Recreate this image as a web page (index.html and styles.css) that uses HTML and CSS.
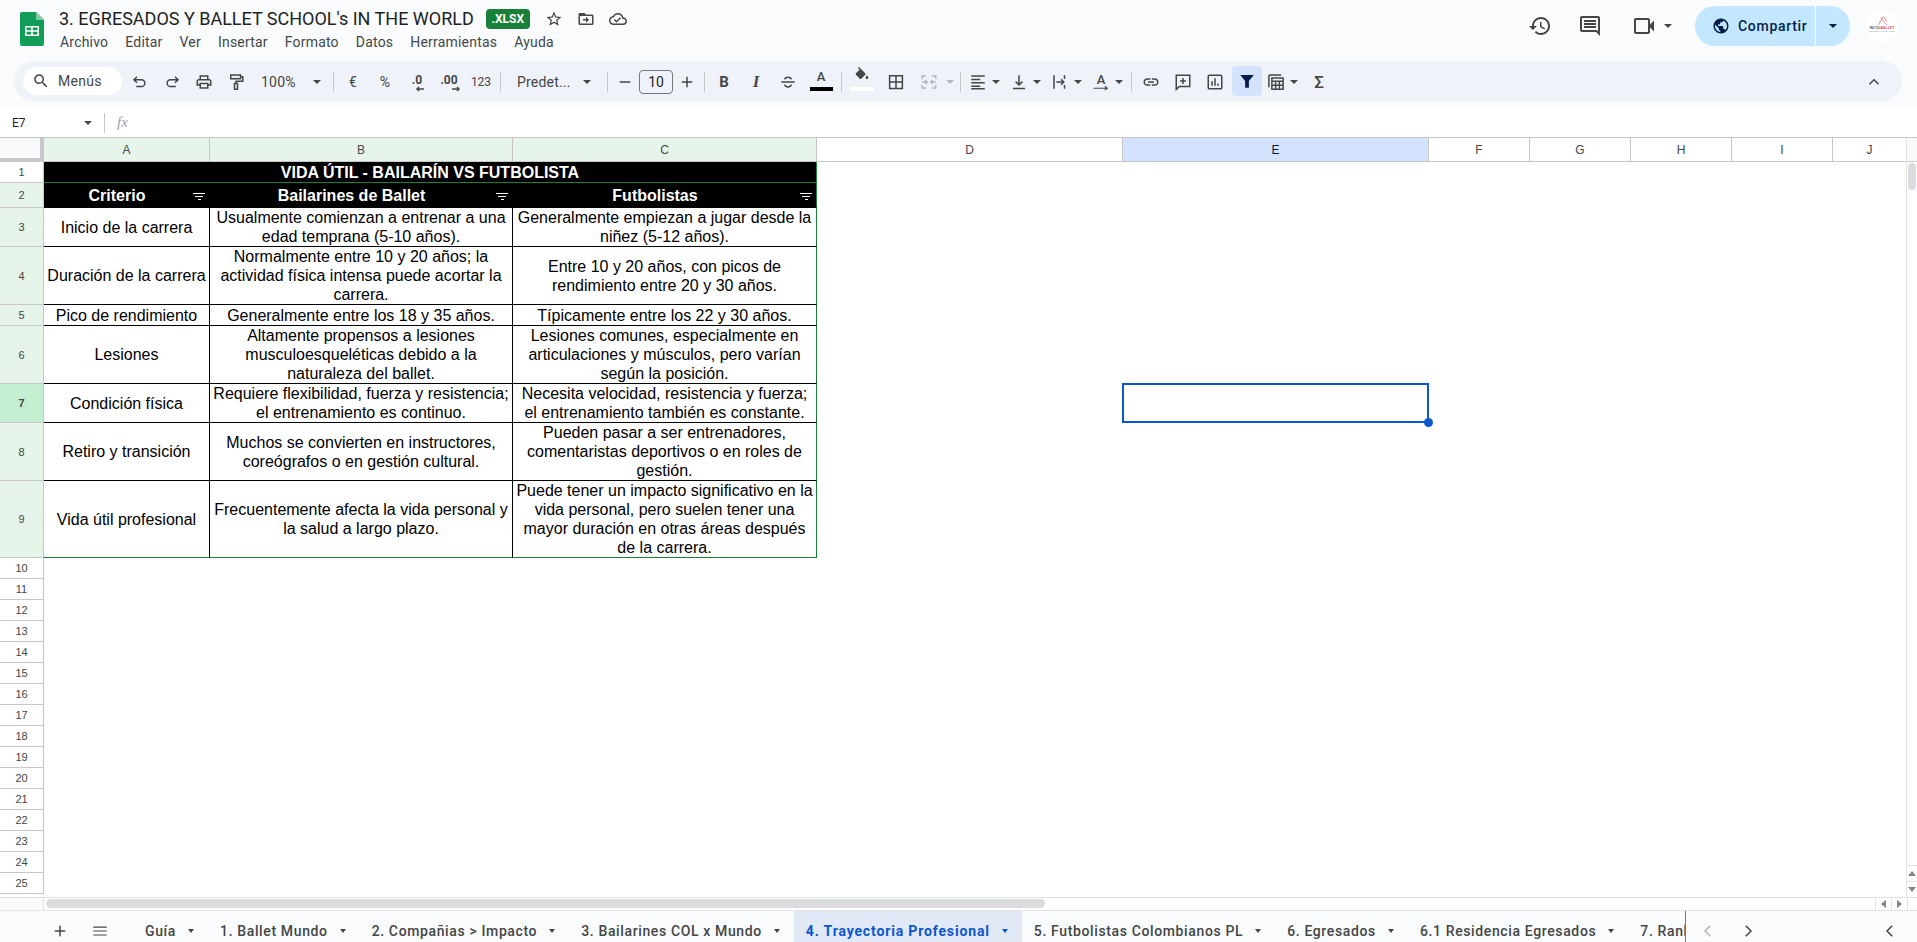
FILE: index.html
```html
<!DOCTYPE html>
<html lang="es">
<head>
  <meta charset="UTF-8" />
  <meta name="viewport" content="width=device-width, initial-scale=1.0" />
  <title>3. EGRESADOS Y BALLET SCHOOL's IN THE WORLD</title>
  <link rel="stylesheet" href="styles.css">
</head>
<body>
  <header class="topbar">
    <svg class="sheets-logo" viewBox="0 0 24 34">
      <path d="M2 0h14l8 8v24a2 2 0 0 1-2 2H2a2 2 0 0 1-2-2V2a2 2 0 0 1 2-2z" fill="#0f9d58"/>
      <path d="M16 0l8 8h-8z" fill="#7cc6a0"/>
      <path d="M5 14h14v10H5zM6.500 15.500v2.800h4.700v-2.800zm6.300 0v2.800h4.700v-2.800zm-6.300 4.300v2.700h4.700v-2.700zm6.300 0v2.700h4.700v-2.700z" fill="#fff" fill-rule="evenodd"/>
    </svg>
    <div class="title-block">
      <div class="title-row">
        <span class="doc-title">3. EGRESADOS Y BALLET SCHOOL's IN THE WORLD</span>
        <span class="badge">.XLSX</span>
        <svg class="title-icon first" viewBox="0 0 24 24"><path d="M22 9.240l-7.190-.62L12 2 9.190 8.630 2 9.240l5.460 4.730L5.820 21 12 17.270 18.180 21l-1.630-7.030L22 9.240zM12 15.400l-3.760 2.270 1-4.280-3.320-2.880 4.380-.38L12 6.100l1.710 4.040 4.380.38-3.320 2.880 1 4.280L12 15.400z"/></svg>
        <svg class="title-icon" viewBox="0 0 24 24"><path d="M20 6h-8l-2-2H4c-1.100 0-2 .9-2 2v12c0 1.100.9 2 2 2h16c1.100 0 2-.9 2-2V8c0-1.100-.9-2-2-2zm0 12H4V8h16v10zm-8-1l4-4-4-4v3H8v2h4z"/></svg>
        <svg class="title-icon" viewBox="0 0 24 24"><path d="M19.350 10.040C18.670 6.590 15.640 4 12 4 9.110 4 6.600 5.640 5.350 8.040 2.340 8.360 0 10.910 0 14c0 3.310 2.690 6 6 6h13c2.760 0 5-2.240 5-5 0-2.640-2.050-4.780-4.650-4.960zM19 18H6c-2.210 0-4-1.790-4-4 0-2.050 1.530-3.760 3.560-3.970l1.070-.11.5-.95C8.080 7.140 9.940 6 12 6c2.620 0 4.880 1.860 5.390 4.430l.3 1.500 1.530.11c1.560.1 2.780 1.410 2.780 2.960 0 1.650-1.350 3-3 3zm-9-3.820l-2.090-2.090L6.500 13.500 10 17l6.010-6.010-1.410-1.410z"/></svg>
      </div>
      <nav class="menu">
        <span>Archivo</span><span>Editar</span><span>Ver</span><span>Insertar</span><span>Formato</span><span>Datos</span><span>Herramientas</span><span>Ayuda</span>
      </nav>
    </div>
    <div class="top-actions">
      <svg class="top-icon" viewBox="0 0 24 24"><path d="M13 3c-4.970 0-9 4.030-9 9H1l3.890 3.890.07.14L9 12H6c0-3.870 3.130-7 7-7s7 3.130 7 7-3.130 7-7 7c-1.930 0-3.680-.79-4.940-2.060l-1.420 1.420C8.270 19.990 10.510 21 13 21c4.970 0 9-4.030 9-9s-4.030-9-9-9zm-1 5v5l4.280 2.540.72-1.210-3.500-2.080V8H12z"/></svg>
      <svg class="top-icon comments" viewBox="0 0 24 24"><path d="M20 2H4c-1.100 0-2 .9-2 2v12c0 1.100.9 2 2 2h14l4 4V4c0-1.100-.9-2-2-2zm0 15.170L18.830 16H4V4h16v13.170zM6 12h12v2H6zm0-3h12v2H6zm0-3h12v2H6z"/></svg>
      <svg class="top-icon video" viewBox="0 0 24 24"><path d="M18 10.480V6c0-1.100-.9-2-2-2H4c-1.100 0-2 .9-2 2v12c0 1.100.9 2 2 2h12c1.100 0 2-.9 2-2v-4.480l4 3.980v-11l-4 3.980zM16 18H4V6h12v12z"/></svg>
      <i class="caret"></i>
      <div class="share">
        <div class="share-main">
          <svg viewBox="0 0 24 24"><path d="M12 2C6.480 2 2 6.480 2 12s4.480 10 10 10 10-4.480 10-10S17.520 2 12 2zm-1 17.930c-3.950-.49-7-3.850-7-7.930 0-.62.08-1.210.21-1.790L9 15v1c0 1.100.9 2 2 2v1.930zm6.900-2.540c-.26-.81-1-1.390-1.900-1.390h-1v-3c0-.55-.45-1-1-1H8v-2h2c.55 0 1-.45 1-1V7h2c1.100 0 2-.9 2-2v-.41c2.930 1.190 5 4.060 5 7.410 0 2.080-.8 3.970-2.100 5.390z"/></svg>
          <span>Compartir</span>
        </div>
        <div class="share-more"><i class="caret dark"></i></div>
      </div>
      <div class="avatar">
        <svg viewBox="0 0 32 12"><path d="M12 11 17 2M15 3l6 8M18 2l3 5" fill="none" stroke="#d9534f" stroke-width=".7"/></svg>
        <span class="avatar-name">INCOL<b>BALLET</b></span>
        <span class="avatar-sub">ESCUELA DE BALLET</span>
      </div>
    </div>
  </header>

  <div class="toolbar-wrap">
    <div class="toolbar">
      <div class="search">
        <svg viewBox="0 0 24 24"><path d="M15.500 14h-.79l-.28-.27C15.410 12.590 16 11.110 16 9.500 16 5.910 13.090 3 9.500 3S3 5.910 3 9.500 5.910 16 9.500 16c1.610 0 3.090-.59 4.230-1.570l.27.28v.79l5 4.990L20.490 19l-4.990-5zm-6 0C7.010 14 5 11.990 5 9.500S7.010 5 9.500 5 14 7.010 14 9.500 11.990 14 9.500 14z"/></svg>
        <span>Menús</span>
      </div>
      <div class="tb"><svg class="line" viewBox="0 0 24 24"><path d="M8 5 4 9l4 4M4 9h10a4.500 4.500 0 0 1 0 9H7"/></svg></div>
      <div class="tb"><svg class="line" viewBox="0 0 24 24"><path d="M16 5l4 4-4 4M20 9H10a4.500 4.500 0 0 0 0 9h7"/></svg></div>
      <div class="tb"><svg viewBox="0 0 24 24"><path d="M19 8h-1V3H6v5H5c-1.660 0-3 1.340-3 3v6h4v4h12v-4h4v-6c0-1.660-1.340-3-3-3zM8 5h8v3H8V5zm8 12v2H8v-4h8v2zm2-2v-2H6v2H4v-4c0-.55.45-1 1-1h14c.55 0 1 .45 1 1v4h-2z"/></svg></div>
      <div class="tb"><svg class="line" viewBox="0 0 24 24"><path d="M5 2.500h13v5H5zM18 5h3v6h-9v3M10 14h4v7.500h-4z"/></svg></div>
      <div class="tb-zoom"><span>100%</span><i class="caret"></i></div>
      <i class="sep"></i>
      <div class="tb num">€</div>
      <div class="tb num">%</div>
      <div class="tb num"><span class="dec">.0<svg viewBox="0 0 10 6"><path d="M9 3H2M4 1 2 3l2 2"/></svg></span></div>
      <div class="tb num"><span class="dec">.00<svg viewBox="0 0 10 6"><path d="M1 3h7M6 1l2 2-2 2"/></svg></span></div>
      <div class="tb num small">123</div>
      <i class="sep"></i>
      <div class="tb-font"><span>Predet...</span><i class="caret"></i></div>
      <i class="sep"></i>
      <div class="tb tb-28"><svg viewBox="0 0 24 24"><path d="M5 11h14v2H5z"/></svg></div>
      <div class="size-box">10</div>
      <div class="tb tb-28"><svg viewBox="0 0 24 24"><path d="M19 13h-6v6h-2v-6H5v-2h6V5h2v6h6z"/></svg></div>
      <i class="sep"></i>
      <div class="tb letter bold">B</div>
      <div class="tb letter ital">I</div>
      <div class="tb"><svg class="line" viewBox="0 0 24 24"><path d="M3 12h18M16.500 8.500C16 6.500 14 5.500 12 5.500S8 6.500 7.500 8.500M7.500 15.500c.5 2 2.500 3 4.500 3s4-1 4.500-3"/></svg></div>
      <div class="tb tb-34 color"><span>A</span><i class="color-bar black"></i></div>
      <i class="sep"></i>
      <div class="tb tb-34 color"><svg viewBox="0 0 24 24"><path d="M16.560 8.940L7.620 0 6.210 1.410l2.380 2.380-5.150 5.150c-.59.59-.59 1.540 0 2.120l5.500 5.500c.29.29.68.44 1.060.44s.77-.15 1.060-.44l5.500-5.500c.59-.58.59-1.530 0-2.120zM19 11.500s-2 2.170-2 3.500c0 1.100.9 2 2 2s2-.9 2-2c0-1.330-2-3.500-2-3.500z"/></svg><i class="color-bar white"></i></div>
      <div class="tb tb-34"><svg class="line" viewBox="0 0 24 24"><path d="M3.500 3.500h17v17h-17zM12 3.500v17M3.500 12h17"/></svg></div>
      <div class="tb tb-merge">
        <svg class="line off" viewBox="0 0 24 24"><path d="M3 8V4h5M16 4h5v4M3 16v4h5M16 20h5v-4M3 12h6M7 9.500 9.500 12 7 14.500M21 12h-6M17 9.500 14.500 12 17 14.500"/></svg>
        <i class="caret off"></i>
      </div>
      <i class="sep"></i>
      <div class="tb-split"><span class="ic"><svg viewBox="0 0 24 24"><path d="M3 3h18v2H3zM3 7.500h12v2H3zM3 12h18v2H3zM3 16.500h12v2H3zM3 20h18v2H3z"/></svg></span><i class="caret"></i></div>
      <div class="tb-split"><span class="ic"><svg class="line" viewBox="0 0 24 24"><path d="M12 3v13M7.500 11.500 12 16l4.500-4.500M4 20.500h16"/></svg></span><i class="caret"></i></div>
      <div class="tb-split"><span class="ic"><svg class="line" viewBox="0 0 24 24"><path d="M4 3v18M18 3v5M18 16v5M7 12h10M13.500 8.500 17 12l-3.500 3.500"/></svg></span><i class="caret"></i></div>
      <div class="tb-split narrow"><span class="ic rotate">A<svg class="line" viewBox="0 0 24 8"><path d="M2 3h18M17 0.500 20.500 3 17 5.500"/></svg></span><i class="caret"></i></div>
      <i class="sep"></i>
      <div class="tb"><svg viewBox="0 0 24 24"><path d="M3.900 12c0-1.710 1.390-3.100 3.100-3.100h4V7H7c-2.760 0-5 2.240-5 5s2.240 5 5 5h4v-1.900H7c-1.710 0-3.100-1.390-3.100-3.100zM8 13h8v-2H8v2zm9-6h-4v1.900h4c1.710 0 3.100 1.390 3.100 3.100s-1.390 3.100-3.100 3.100h-4V17h4c2.760 0 5-2.240 5-5s-2.240-5-5-5z"/></svg></div>
      <div class="tb"><svg class="line" viewBox="0 0 24 24"><path d="M3 3h18v15H7l-4 4zM12 6.500v8M8 10.500h8"/></svg></div>
      <div class="tb"><svg class="line" viewBox="0 0 24 24"><path d="M4.500 3h15a1.500 1.500 0 0 1 1.500 1.500v15a1.500 1.500 0 0 1-1.500 1.500h-15A1.500 1.500 0 0 1 3 19.500v-15A1.500 1.500 0 0 1 4.500 3zM8 17v-6M12 17V7M16 17v-3"/></svg></div>
      <div class="tb tb-filter"><svg viewBox="0 0 24 24"><path d="M3 4h18l-6.500 8v9h-5v-9z"/></svg></div>
      <div class="tb-split narrow"><span class="ic"><svg class="line" viewBox="0 0 24 24"><path d="M2.500 19V4.500A2 2 0 0 1 4.500 2.500H19M6.500 6.500h15v15h-15zM6.500 11h15M6.500 16.200h15M11.500 11v10.500M16.500 11v10.500"/></svg></span><i class="caret"></i></div>
      <div class="tb letter sigma">Σ</div>
      <div class="tb collapse"><svg class="line" viewBox="0 0 24 24"><path d="M6 15l6-6 6 6"/></svg></div>
    </div>
  </div>

  <div class="formula-bar">
    <span class="cell-name">E7</span>
    <i class="caret"></i>
    <i class="sep tall"></i>
    <span class="fx">fx</span>
  </div>

  <main class="main">
    <div class="grid">
      <table class="sheet">
        <colgroup>
          <col class="c-head"><col class="c-a"><col class="c-b"><col class="c-c"><col class="c-d"><col class="c-d"><col class="c-f"><col class="c-f"><col class="c-f"><col class="c-f"><col class="c-j">
        </colgroup>
        <thead>
          <tr class="col-row">
            <th class="corner"></th>
            <th class="filtered">A</th><th class="filtered">B</th><th class="filtered">C</th>
            <th>D</th><th class="active">E</th><th>F</th><th>G</th><th>H</th><th>I</th><th class="no-line">J</th>
          </tr>
        </thead>
        <tbody>
          <tr class="h21">
            <th class="rn">1</th>
            <td class="title-cell" colspan="3">VIDA ÚTIL - BAILARÍN VS FUTBOLISTA</td>
            <td class="blank" colspan="7"></td>
          </tr>
          <tr class="h25">
            <th class="rn in">2</th>
            <td class="head-cell">Criterio<span class="filter-ic"></span></td>
            <td class="head-cell">Bailarines de Ballet<span class="filter-ic"></span></td>
            <td class="head-cell last">Futbolistas<span class="filter-ic"></span></td>
            <td class="blank" colspan="7"></td>
          </tr>
          <tr class="h39">
            <th class="rn in">3</th>
            <td>Inicio de la carrera</td>
            <td>Usualmente comienzan a entrenar a una<br>edad temprana (5-10 años).</td>
            <td class="last">Generalmente empiezan a jugar desde la<br>niñez (5-12 años).</td>
            <td class="blank" colspan="7"></td>
          </tr>
          <tr class="h58">
            <th class="rn in">4</th>
            <td>Duración de la carrera</td>
            <td>Normalmente entre 10 y 20 años; la<br>actividad física intensa puede acortar la<br>carrera.</td>
            <td class="last">Entre 10 y 20 años, con picos de<br>rendimiento entre 20 y 30 años.</td>
            <td class="blank" colspan="7"></td>
          </tr>
          <tr class="h21">
            <th class="rn in">5</th>
            <td>Pico de rendimiento</td>
            <td>Generalmente entre los 18 y 35 años.</td>
            <td class="last">Típicamente entre los 22 y 30 años.</td>
            <td class="blank" colspan="7"></td>
          </tr>
          <tr class="h58">
            <th class="rn in">6</th>
            <td>Lesiones</td>
            <td>Altamente propensos a lesiones<br>musculoesqueléticas debido a la<br>naturaleza del ballet.</td>
            <td class="last">Lesiones comunes, especialmente en<br>articulaciones y músculos, pero varían<br>según la posición.</td>
            <td class="blank" colspan="7"></td>
          </tr>
          <tr class="h39">
            <th class="rn in sel">7</th>
            <td>Condición física</td>
            <td>Requiere flexibilidad, fuerza y resistencia;<br>el entrenamiento es continuo.</td>
            <td class="last">Necesita velocidad, resistencia y fuerza;<br>el entrenamiento también es constante.</td>
            <td class="blank" colspan="7"></td>
          </tr>
          <tr class="h58">
            <th class="rn in">8</th>
            <td>Retiro y transición</td>
            <td>Muchos se convierten en instructores,<br>coreógrafos o en gestión cultural.</td>
            <td class="last">Pueden pasar a ser entrenadores,<br>comentaristas deportivos o en roles de<br>gestión.</td>
            <td class="blank" colspan="7"></td>
          </tr>
          <tr class="h77 end">
            <th class="rn in">9</th>
            <td>Vida útil profesional</td>
            <td>Frecuentemente afecta la vida personal y<br>la salud a largo plazo.</td>
            <td class="last">Puede tener un impacto significativo en la<br>vida personal, pero suelen tener una<br>mayor duración en otras áreas después<br>de la carrera.</td>
            <td class="blank" colspan="7"></td>
          </tr>
          <tr class="h21"><th class="rn">10</th><td class="blank" colspan="10"></td></tr>
          <tr class="h21"><th class="rn">11</th><td class="blank" colspan="10"></td></tr>
          <tr class="h21"><th class="rn">12</th><td class="blank" colspan="10"></td></tr>
          <tr class="h21"><th class="rn">13</th><td class="blank" colspan="10"></td></tr>
          <tr class="h21"><th class="rn">14</th><td class="blank" colspan="10"></td></tr>
          <tr class="h21"><th class="rn">15</th><td class="blank" colspan="10"></td></tr>
          <tr class="h21"><th class="rn">16</th><td class="blank" colspan="10"></td></tr>
          <tr class="h21"><th class="rn">17</th><td class="blank" colspan="10"></td></tr>
          <tr class="h21"><th class="rn">18</th><td class="blank" colspan="10"></td></tr>
          <tr class="h21"><th class="rn">19</th><td class="blank" colspan="10"></td></tr>
          <tr class="h21"><th class="rn">20</th><td class="blank" colspan="10"></td></tr>
          <tr class="h21"><th class="rn">21</th><td class="blank" colspan="10"></td></tr>
          <tr class="h21"><th class="rn">22</th><td class="blank" colspan="10"></td></tr>
          <tr class="h21"><th class="rn">23</th><td class="blank" colspan="10"></td></tr>
          <tr class="h21"><th class="rn">24</th><td class="blank" colspan="10"></td></tr>
          <tr class="h21"><th class="rn">25</th><td class="blank" colspan="10"></td></tr>
        </tbody>
      </table>
      <div class="selection"><i class="handle"></i></div>
    </div>
    <div class="vscroll">
      <div class="vscroll-head"></div>
      <div class="vscroll-track"><div class="vscroll-thumb"></div></div>
      <div class="sb-btn"><i class="tri up"></i></div>
      <div class="sb-btn"><i class="tri down"></i></div>
    </div>
  </main>

  <div class="hscroll">
    <div class="hscroll-corner"></div>
    <div class="hscroll-track"><div class="hscroll-thumb"></div></div>
    <div class="sb-btn side"><i class="tri left"></i></div>
    <div class="sb-btn side"><i class="tri right"></i></div>
    <div class="hscroll-end"></div>
  </div>

  <footer class="tabbar">
    <div class="tab-tools">
      <svg viewBox="0 0 24 24"><path d="M19 13h-6v6h-2v-6H5v-2h6V5h2v6h6z"/></svg>
      <svg viewBox="0 0 24 24"><path d="M3 6h18v1.500H3zM3 11.200h18v1.500H3zM3 16.500h18V18H3z"/></svg>
    </div>
    <div class="tabs">
      <div class="tab">Guía<i class="caret"></i></div>
      <div class="tab">1. Ballet Mundo<i class="caret"></i></div>
      <div class="tab">2. Compañias &gt; Impacto<i class="caret"></i></div>
      <div class="tab">3. Bailarines COL x Mundo<i class="caret"></i></div>
      <div class="tab current">4. Trayectoria Profesional<i class="caret"></i></div>
      <div class="tab">5. Futbolistas Colombianos PL<i class="caret"></i></div>
      <div class="tab">6. Egresados<i class="caret"></i></div>
      <div class="tab">6.1 Residencia Egresados<i class="caret"></i></div>
      <div class="tab">7. Ranking<i class="caret"></i></div>
    </div>
    <div class="tab-nav">
      <svg class="line faint" viewBox="0 0 24 24"><path d="M15 5l-7 7 7 7"/></svg>
      <svg class="line" viewBox="0 0 24 24"><path d="M9 5l7 7-7 7"/></svg>
    </div>
    <svg class="line tab-collapse" viewBox="0 0 24 24"><path d="M15 5l-7 7 7 7"/></svg>
  </footer>
</body>
</html>
```

FILE: styles.css
```css
* { box-sizing: border-box; }
html, body { height: 100%; }
body {
  margin: 0;
  width: 1917px;
  height: 942px;
  overflow: hidden;
  display: flex;
  flex-direction: column;
  background: #fff;
  color: #444746;
  font-family: Roboto, "Liberation Sans", sans-serif;
}
svg { fill: #444746; display: block; flex: none; }
svg.line { fill: none; stroke: #444746; stroke-width: 2; }
svg.line.off { stroke: #b4b7ba; }
svg.line.faint { stroke: #b4b7ba; }

/* little triangles */
.caret {
  display: block;
  flex: none;
  width: 0;
  height: 0;
  border-left: 4px solid transparent;
  border-right: 4px solid transparent;
  border-top: 4px solid #444746;
}
.caret.dark { border-top-color: #041e49; }
.caret.off { border-top-color: #b4b7ba; }

/* top bar */
.topbar {
  height: 61px;
  flex: none;
  display: flex;
  background: #f9fbfd;
  padding-left: 20px;
}
.sheets-logo { width: 24px; height: 34px; margin-top: 12px; }
.title-block { margin-left: 15px; padding-top: 6px; }
.title-row { display: flex; align-items: center; height: 24px; }
.doc-title { font-size: 18px; color: #1f1f1f; white-space: nowrap; }
.badge {
  margin-left: 12px;
  margin-top: 2px;
  width: 44px;
  height: 20px;
  border-radius: 4px;
  background: #188038;
  color: #fff;
  font-size: 12px;
  font-weight: 700;
  line-height: 20px;
  text-align: center;
}
.title-icon { width: 18px; height: 18px; margin-left: 14px; margin-top: 2px; }
.title-icon.first { margin-left: 15px; }
.menu {
  display: flex;
  gap: 17px;
  height: 22px;
  margin-top: 1px;
  padding-left: 1px;
  font-size: 14px;
  line-height: 22px;
  color: #444746;
  letter-spacing: 0.2px;
}
.top-actions {
  margin-left: auto;
  display: flex;
  align-items: center;
  height: 52px;
  padding-right: 19px;
}
.top-icon { width: 24px; height: 24px; }
.top-icon.comments { margin-left: 26px; }
.top-icon.video { margin-left: 30px; }
.top-actions > .caret { margin-left: 8px; }
.share {
  margin-left: 23px;
  width: 155px;
  height: 40px;
  display: flex;
  border-radius: 20px;
  overflow: hidden;
  color: #041e49;
}
.share-main {
  width: 121px;
  background: #c2e7ff;
  display: flex;
  align-items: center;
  gap: 8px;
  padding-left: 17px;
  font-size: 14px;
  font-weight: 500;
  letter-spacing: 0.7px;
  border-right: 1px solid #fff;
}
.share-main svg { width: 18px; height: 18px; fill: #041e49; }
.share-more {
  flex: 1;
  background: #c2e7ff;
  display: flex;
  align-items: center;
  justify-content: center;
}
.avatar {
  margin-left: 16px;
  width: 32px;
  height: 32px;
  border-radius: 50%;
  background: #fff;
  display: flex;
  flex-direction: column;
  align-items: center;
  padding-top: 5px;
  overflow: hidden;
}
.avatar svg { width: 30px; height: 11px; }
.avatar-name { font: 700 3.5px/4px "Liberation Sans", sans-serif; color: #555; white-space: nowrap; }
.avatar-name b { color: #d9534f; }
.avatar-sub { font: 2.5px/4px "Liberation Sans", sans-serif; color: #999; white-space: nowrap; }

/* toolbar */
.toolbar-wrap {
  height: 47px;
  flex: none;
  background: #f9fbfd;
  padding: 0 15px 7px 14px;
}
.toolbar {
  height: 40px;
  display: flex;
  align-items: center;
  padding: 2px 12px 0 9px;
  background: #eff2f8;
  border-radius: 20px;
  font-size: 14px;
}
.search {
  width: 99px;
  height: 28px;
  margin-top: -2px;
  margin-right: 2px;
  padding-left: 9px;
  display: flex;
  align-items: center;
  gap: 8px;
  background: #fff;
  border-radius: 14px;
  letter-spacing: 0.3px;
  white-space: nowrap;
}
.search svg { width: 18px; height: 18px; }
.tb {
  width: 32px;
  height: 30px;
  flex: none;
  display: flex;
  align-items: center;
  justify-content: center;
}
.tb svg, .ic svg { width: 18px; height: 18px; }
.tb-28 { width: 28px; }
.tb-34 { width: 34px; }
.tb-zoom {
  width: 78px;
  display: flex;
  align-items: center;
  padding-left: 9px;
  letter-spacing: 0.2px;
}
.tb-zoom .caret { margin-left: 17px; }
.num { font-size: 14px; }
.num.small { font-size: 12px; }
.dec {
  position: relative;
  display: block;
  font-size: 12px;
  font-weight: 700;
  line-height: 12px;
  margin-top: -5px;
}
.dec svg {
  position: absolute;
  right: -3px;
  top: 12px;
  width: 10px;
  height: 6px;
  fill: none;
  stroke: #444746;
  stroke-width: 1.500;
}
.sep {
  display: block;
  flex: none;
  width: 1px;
  height: 20px;
  margin: 0 3px;
  background: #c7c7c7;
}
.tb-font {
  width: 100px;
  display: flex;
  align-items: center;
  padding-left: 13px;
  letter-spacing: 0.2px;
  white-space: nowrap;
}
.tb-font .caret { margin-left: 12px; }
.size-box {
  width: 34px;
  height: 24px;
  flex: none;
  border: 1px solid #747775;
  border-radius: 4px;
  text-align: center;
  line-height: 22px;
  font-size: 14px;
  color: #1f1f1f;
}
.letter { font-size: 15px; color: #444746; }
.bold { font-weight: 700; }
.ital { font-family: "Liberation Serif", serif; font-style: italic; font-weight: 700; font-size: 17px; }
.sigma { font-size: 17px; font-weight: 500; }
.color {
  flex-direction: column;
  justify-content: flex-start;
  padding-top: 1px;
  font-size: 13px;
  font-weight: 500;
  line-height: 17px;
}
.color svg { width: 18px; height: 17px; margin-top: -1px; }
.color-bar { display: block; width: 23px; height: 4px; margin-top: 2px; }
.color svg + .color-bar { margin-top: 3px; }
.color-bar.black { background: #000; }
.color-bar.white { background: #fff; }
.tb-merge { width: 44px; justify-content: flex-start; padding-left: 7px; }
.tb-merge .caret { margin-left: 8px; }
.tb-split {
  width: 41px;
  height: 30px;
  flex: none;
  display: flex;
  align-items: center;
}
.ic {
  width: 28px;
  height: 30px;
  display: flex;
  align-items: center;
  justify-content: center;
}
.rotate {
  flex-direction: column;
  font-size: 13px;
  line-height: 13px;
  font-weight: 500;
}
.rotate svg { width: 18px; height: 6px; }
.rotate svg.line { stroke-width: 1.500; }
.tb-filter {
  width: 30px;
  margin-left: 1px;
  margin-top: -2px;
  background: #d3e3fd;
  border-radius: 4px;
}
.tb-filter svg { fill: #041e49; }
.collapse { margin-left: auto; }

/* formula bar */
.formula-bar {
  height: 30px;
  flex: none;
  display: flex;
  align-items: center;
  padding-left: 12px;
  border-bottom: 1px solid #c7c7c7;
  background: #fff;
}
.cell-name { width: 72px; font-size: 12px; color: #1f1f1f; }
.sep.tall { margin: 0 0 0 12px; }
.fx {
  margin-left: 12px;
  font: italic 15px "Liberation Serif", serif;
  color: #9aa0a6;
}

/* grid */
.main { height: 759px; flex: none; display: flex; }
.grid { position: relative; width: 1906px; flex: none; overflow: hidden; }
.sheet {
  table-layout: fixed;
  width: 1906px;
  border-collapse: separate;
  border-spacing: 0;
  font-family: "Liberation Sans", Arial, sans-serif;
}
.c-head { width: 44px; }
.c-a { width: 166px; }
.c-b { width: 303px; }
.c-c { width: 304px; }
.c-d { width: 306px; }
.c-f { width: 101px; }
.c-j { width: 73px; }
.col-row th {
  height: 24px;
  padding: 0;
  background: #fff;
  border-right: 1px solid #c7c7c7;
  border-bottom: 1px solid #c7c7c7;
  font-size: 12px;
  font-weight: 400;
  color: #444746;
}
.col-row th.filtered { background: #e6f4ea; }
.col-row th.active { background: #d3e3fd; color: #041e49; }
.col-row th.corner {
  background: #f8f9fa;
  border-right: 4px solid #c7c7c7;
  border-bottom: 4px solid #c7c7c7;
}
.col-row th.no-line { border-right: 0; }
.rn {
  padding: 0;
  background: #fff;
  border-right: 1px solid #c7c7c7;
  border-bottom: 1px solid #c7c7c7;
  font-size: 11px;
  font-weight: 400;
  color: #444746;
}
.rn.in { background: #e6f4ea; }
.rn.sel { background: #c4eed0; font-weight: 700; }
.h21 { height: 21px; }
.h25 { height: 25px; }
.h39 { height: 39px; }
.h58 { height: 58px; }
.h77 { height: 77px; }
.sheet td {
  padding: 0 2px;
  border-right: 1px solid #000;
  border-bottom: 1px solid #000;
  font-size: 16px;
  line-height: 19px;
  color: #000;
  text-align: center;
  vertical-align: middle;
  white-space: nowrap;
}
.sheet td.last { border-right-color: #188038; }
.sheet td.title-cell {
  background: #000;
  color: #fff;
  font-weight: 700;
  border-right-color: #188038;
  border-bottom-color: #188038;
}
.sheet td.head-cell {
  position: relative;
  padding-right: 21px;
  background: #000;
  color: #fff;
  font-weight: 700;
}
.sheet .end td { border-bottom-color: #188038; }
.sheet td.blank, .sheet .end td.blank { border: 0; }
/* filter button in a header cell */
.filter-ic {
  position: absolute;
  right: 4px;
  top: 10px;
  width: 12px;
  height: 7px;
  background:
    linear-gradient(#fff, #fff) center 0 / 12px 1px no-repeat,
    linear-gradient(#fff, #fff) center 3px / 8px 1px no-repeat,
    linear-gradient(#fff, #fff) center 6px / 3px 1px no-repeat;
}
.selection {
  position: absolute;
  left: 1122px;
  top: 245px;
  width: 307px;
  height: 40px;
  border: 2px solid #0b57d0;
}
.handle {
  position: absolute;
  right: -6px;
  bottom: -6px;
  width: 9px;
  height: 9px;
  border-radius: 50%;
  background: #0b57d0;
}

/* scrollbars */
.vscroll {
  width: 11px;
  flex: none;
  display: flex;
  flex-direction: column;
  border-left: 1px solid #e1e3e1;
}
.vscroll-head { height: 24px; flex: none; background: #f8f9fa; border-bottom: 1px solid #c7c7c7; }
.vscroll-track { flex: 1; padding: 1px 0 0 1px; }
.vscroll-thumb { width: 8px; height: 27px; background: #dadce0; border-radius: 4px; }
.sb-btn {
  height: 16px;
  flex: none;
  display: flex;
  align-items: center;
  justify-content: center;
  border-top: 1px solid #e1e3e1;
}
.tri { display: block; width: 0; height: 0; border: 4px solid transparent; }
.tri.up { border-bottom: 5px solid #80868b; border-top: 0; }
.tri.down { border-top: 5px solid #80868b; border-bottom: 0; }
.tri.left { border-right: 5px solid #80868b; border-left: 0; }
.tri.right { border-left: 5px solid #80868b; border-right: 0; }
.hscroll {
  height: 14px;
  flex: none;
  display: flex;
  border-top: 1px solid #e1e3e1;
  border-bottom: 1px solid #e1e3e1;
}
.hscroll-corner { width: 44px; background: #f8f9fa; border-right: 1px solid #e1e3e1; }
.hscroll-track { width: 1831px; padding: 1px 0 0 2px; }
.hscroll-thumb { width: 999px; height: 9px; background: #dadce0; border-radius: 5px; }
.sb-btn.side { width: 16px; height: 12px; border-top: 0; border-left: 1px solid #e1e3e1; }
.hscroll-end { flex: 1; border-left: 1px solid #e1e3e1; }

/* sheet tabs */
.tabbar {
  height: 31px;
  flex: none;
  display: flex;
  align-items: stretch;
  background: #f9fbfd;
}
.tab-tools {
  width: 133px;
  flex: none;
  display: flex;
  align-items: center;
  padding: 8px 0 0 51px;
  gap: 22px;
}
.tab-tools svg { width: 18px; height: 18px; }
.tabs {
  width: 1553px;
  flex: none;
  display: flex;
  overflow: hidden;
  border-right: 1px solid #747775;
}
.tab {
  flex: none;
  display: flex;
  align-items: center;
  gap: 12px;
  padding: 8px 14px 0 12px;
  font-size: 14px;
  font-weight: 500;
  letter-spacing: 0.63px;
  white-space: nowrap;
}
.tab .caret { border-left-width: 3.500px; border-right-width: 3.500px; }
.tab.current { background: #e1e9f7; color: #0b57d0; font-weight: 700; letter-spacing: 0.85px; }
.tab.current .caret { border-top-color: #0b57d0; }
.tab-nav {
  display: flex;
  align-items: center;
  gap: 22px;
  padding: 8px 0 0 13px;
}
.tab-nav svg { width: 18px; height: 18px; }
.tab-collapse { width: 18px; height: 18px; align-self: center; margin: 8px 18px 0 auto; }
```
